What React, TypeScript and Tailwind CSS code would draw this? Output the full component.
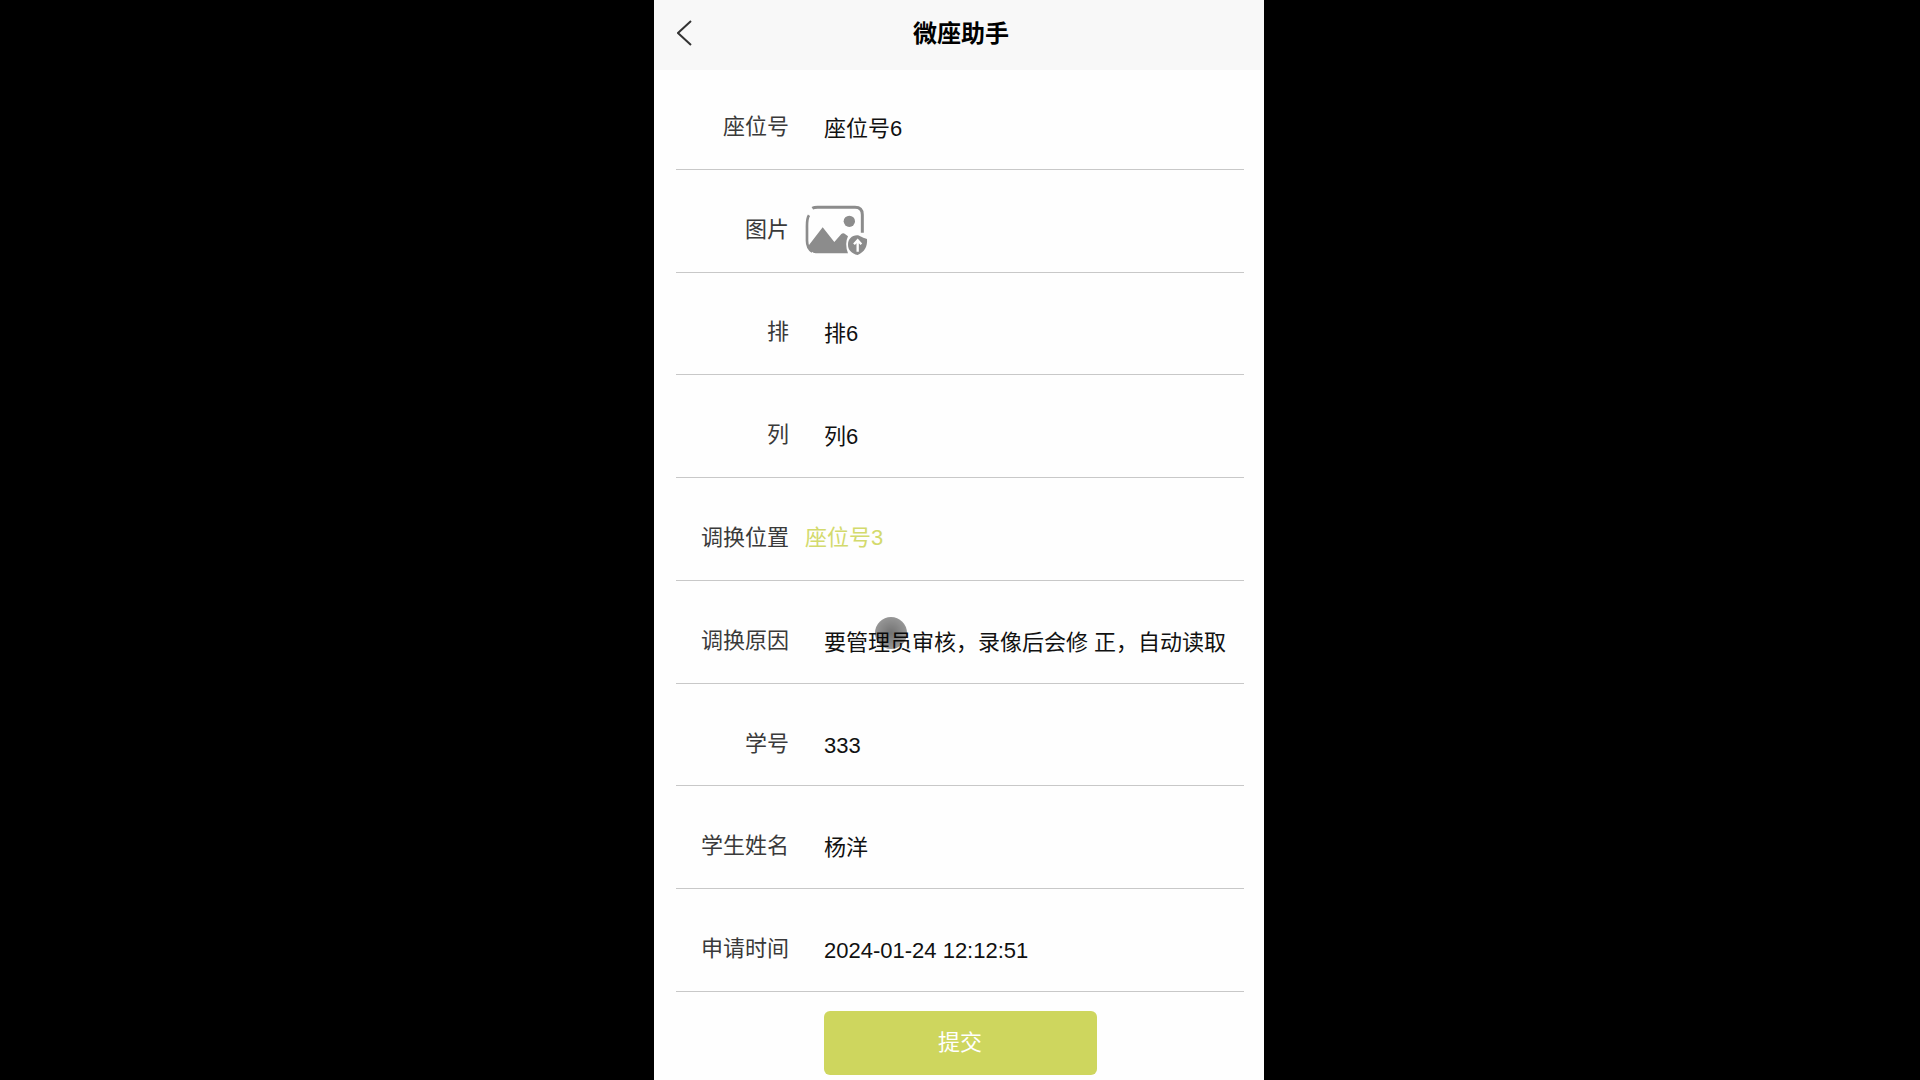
import React, { useState } from 'react';

type Field = {
  id: string;
  label: string;
  value?: string;
  kind: 'text' | 'image' | 'select';
};

const fields: Field[] = [
  { id: 'seat', label: '座位号', value: '座位号6', kind: 'text' },
  { id: 'picture', label: '图片', kind: 'image' },
  { id: 'row', label: '排', value: '排6', kind: 'text' },
  { id: 'column', label: '列', value: '列6', kind: 'text' },
  { id: 'target', label: '调换位置', value: '座位号3', kind: 'select' },
  { id: 'reason', label: '调换原因', value: '要管理员审核，录像后会修 正，自动读取', kind: 'text' },
  { id: 'studentNo', label: '学号', value: '333', kind: 'text' },
  { id: 'studentName', label: '学生姓名', value: '杨洋', kind: 'text' },
  { id: 'applyTime', label: '申请时间', value: '2024-01-24 12:12:51', kind: 'text' },
];

const UploadIcon = () => (
  <svg className="w-16 h-[52px]" viewBox="48 40 192 156" fill="none">
    {/* Frame */}
    <path d="M70 53 C75 50 80 50 86 50 H198 C212 50 220 58 220 72 V126" stroke="#8c8c8c" strokeWidth="9" />
    <path d="M60 74 C53 84 54 96 54 112 V150 C54 166 60 176 70 183" stroke="#8c8c8c" strokeWidth="8" />
    {/* Sun and mountains */}
    <circle cx="181" cy="92" r="17" fill="#8c8c8c" />
    <path d="M56 168 L101 110 L136 154 L157 130 Q163 125 169 131 L177 137 Q166 160 177 188 H80 Q66 186 56 168 Z" fill="#8c8c8c" />
    {/* Upload badge */}
    <path d="M204 134 C212 134 216 140 234 145 C236 168 226 184 206 193 C188 188 177 178 177 162 C177 146 188 134 204 134 Z" fill="#8c8c8c" />
    <path d="M206 183 V154 M195 161 L206 149 L217 161" stroke="#fff" strokeWidth="7" />
  </svg>
);

const FormRow = ({ field }: { field: Field }) => {
  const [value, setValue] = useState(field.value ?? '');

  return (
    <div className="flex-1 flex items-center pt-[18px] border-b border-[#c8c8c8]">
      <label htmlFor={field.id} className="w-[113px] shrink-0 text-right text-[#3a3a3a]">
        {field.label}
      </label>
      <div className="relative flex-1 flex items-center ml-4">
        {field.kind === 'text' && (
          <input
            id={field.id}
            type="text"
            value={value}
            onChange={(e) => setValue(e.target.value)}
            className="w-full pl-[19px] pt-1 bg-transparent text-[#111] outline-none"
          />
        )}
        {field.kind === 'image' && (
          <button id={field.id} type="button" aria-label="图片" className="cursor-pointer">
            <UploadIcon />
          </button>
        )}
        {field.kind === 'select' && (
          <select
            id={field.id}
            value={value}
            onChange={(e) => setValue(e.target.value)}
            className="w-full appearance-none bg-transparent text-[#d3da6c] outline-none"
          >
            <option value={field.value}>{field.value}</option>
          </select>
        )}
        {/* Touch pointer */}
        {field.id === 'reason' && (
          <span className="absolute left-[70px] -top-1.5 size-8 rounded-full bg-radial from-black/55 to-black/35 pointer-events-none" />
        )}
      </div>
    </div>
  );
};

const App = () => {
  return (
    <div className="min-h-screen bg-black flex justify-center font-['Liberation_Sans','Noto_Sans_CJK_SC',sans-serif]">
      <div className="w-full max-w-[610px] -ml-0.5 min-h-screen flex flex-col bg-[#fefefe] text-[22px] leading-8">

        {/* Header */}
        <header className="relative h-[70px] shrink-0 flex items-center justify-center pl-1 pb-0.5 bg-[#f8f8f8]">
          <button type="button" aria-label="返回" className="absolute left-[19px] top-[15px] p-1 cursor-pointer">
            <svg className="w-4 h-7" viewBox="0 0 16 28" fill="none" stroke="#333" strokeWidth="2">
              <path d="M14 2 L1 14 L14 26" />
            </svg>
          </button>
          <h1 className="text-2xl font-bold text-black">微座助手</h1>
        </header>

        {/* Form */}
        <form className="flex-1 flex flex-col" onSubmit={(e) => e.preventDefault()}>
          <div className="flex-1 flex flex-col -mt-[3px] pl-[22px] pr-5">
            {fields.map((field) => (
              <FormRow key={field.id} field={field} />
            ))}
          </div>
          <div className="flex justify-center pt-[19px] pb-[5px] pl-0.5">
            <button
              type="submit"
              className="w-[273px] h-16 rounded-md bg-[#ced65e] text-white cursor-pointer"
            >
              提交
            </button>
          </div>
        </form>
      </div>
    </div>
  );
};

export default App;
